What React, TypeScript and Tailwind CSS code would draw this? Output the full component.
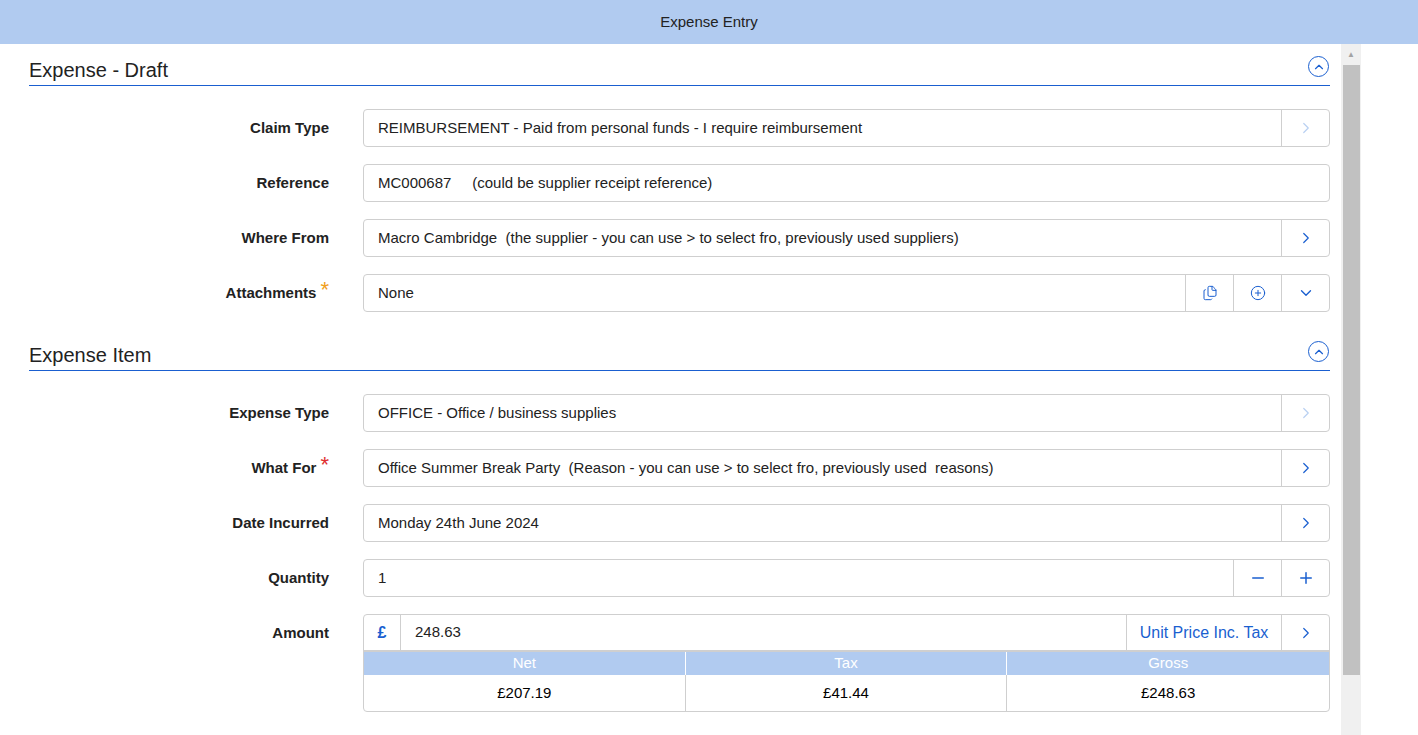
import { ChevronRight, ChevronUp, ChevronDown, Minus, Plus, Files, CirclePlus } from "lucide-react"

function Btn({ children, faded, w = "w-[48px]" }: { children: React.ReactNode; faded?: boolean; w?: string }) {
  return (
    <div className={`${w} flex items-center justify-center border-l border-[#cfcfcf] ${faded ? "text-[#b9d0f2]" : "text-[#1a5fd0]"}`}>
      {children}
    </div>
  )
}

function Row({ label, star, children }: { label: string; star?: string; children: React.ReactNode }) {
  return (
    <div className="flex items-center h-[38px] mb-[17px]">
      <div className="w-[334px] pr-[34px] text-right text-[15px] font-bold text-[#222] flex justify-end items-center">
        {label}
        {star && <span className={`ml-[4px] text-[22px] font-normal leading-none -mt-[6px] ${star}`}>*</span>}
      </div>
      <div className="flex-1 h-[38px] flex border border-[#cfcfcf] rounded-[4px] bg-white">{children}</div>
    </div>
  )
}

function Val({ children }: { children: React.ReactNode }) {
  return <div className="flex-1 flex items-center px-[14px] text-[15px] text-[#222] whitespace-pre">{children}</div>
}

function Section({ title }: { title: string }) {
  return (
    <div className="flex items-center justify-between border-b border-[#1a5fd0] h-[42px] mb-[23px]">
      <span className="text-[20px] text-[#222] pt-[10px]">{title}</span>
      <div className="w-[21px] h-[21px] rounded-full border-[1.5px] border-[#1a5fd0] flex items-center justify-center text-[#1a5fd0] mt-[4px] mr-[1px]">
        <ChevronUp size={14} strokeWidth={2} />
      </div>
    </div>
  )
}

export default function App() {
  const chev = <ChevronRight size={18} strokeWidth={1.6} />
  return (
    <div className="w-[1418px] h-[735px] overflow-hidden bg-white" style={{ fontFamily: "Arial, 'Liberation Sans', sans-serif" }}>
      <div className="h-[44px] bg-[#b1cbf0] flex items-center justify-center text-[15px] text-[#222]">Expense Entry</div>
      <div className="flex h-[691px]">
        <div className="w-[1341px] pl-[29px] pr-[11px]">
          <Section title="Expense - Draft" />
          <Row label="Claim Type">
            <Val>REIMBURSEMENT - Paid from personal funds - I require reimbursement</Val>
            <Btn faded>{chev}</Btn>
          </Row>
          <Row label="Reference">
            <Val>MC000687     (could be supplier receipt reference)</Val>
          </Row>
          <Row label="Where From">
            <Val>Macro Cambridge  (the supplier - you can use {">"} to select fro, previously used suppliers)</Val>
            <Btn>{chev}</Btn>
          </Row>
          <Row label="Attachments" star="text-[#f0a020]">
            <Val>None</Val>
            <Btn><Files size={16} strokeWidth={1.5} /></Btn>
            <Btn><CirclePlus size={16} strokeWidth={1.5} /></Btn>
            <Btn><ChevronDown size={18} strokeWidth={1.8} /></Btn>
          </Row>
          <Section title="Expense Item" />
          <Row label="Expense Type">
            <Val>OFFICE - Office / business supplies</Val>
            <Btn faded>{chev}</Btn>
          </Row>
          <Row label="What For" star="text-[#e03030]">
            <Val>Office Summer Break Party  (Reason - you can use {">"} to select fro, previously used  reasons)</Val>
            <Btn>{chev}</Btn>
          </Row>
          <Row label="Date Incurred">
            <Val>Monday 24th June 2024</Val>
            <Btn>{chev}</Btn>
          </Row>
          <Row label="Quantity">
            <Val>1</Val>
            <Btn><Minus size={18} strokeWidth={2} /></Btn>
            <Btn><Plus size={18} strokeWidth={2} /></Btn>
          </Row>
          <div className="flex">
            <div className="w-[334px] pr-[34px] text-right text-[15px] font-bold text-[#222] h-[38px] flex items-center justify-end">Amount</div>
            <div className="flex-1 border border-[#cfcfcf] rounded-[4px]">
              <div className="h-[37px] flex border-b-2 border-[#cfcfcf]">
                <div className="w-[37px] flex items-center justify-center text-[#1a5fd0] text-[16px] font-bold border-r border-[#cfcfcf]">£</div>
                <Val>248.63</Val>
                <div className="w-[155px] flex items-center justify-center border-l border-[#cfcfcf] text-[#1a5fd0] text-[16px]">Unit Price Inc. Tax</div>
                <Btn>{chev}</Btn>
              </div>
              <div className="grid grid-cols-3 bg-[#b1cbf0] h-[23px] text-white text-[15px]">
                <div className="flex items-center justify-center border-r border-white">Net</div>
                <div className="flex items-center justify-center border-r border-white">Tax</div>
                <div className="flex items-center justify-center">Gross</div>
              </div>
              <div className="grid grid-cols-3 h-[36px] text-[15px] text-black">
                <div className="flex items-center justify-center border-r border-[#cfcfcf]">£207.19</div>
                <div className="flex items-center justify-center border-r border-[#cfcfcf]">£41.44</div>
                <div className="flex items-center justify-center">£248.63</div>
              </div>
            </div>
          </div>
        </div>
        <div className="w-[20px] bg-[#f0f0f0] flex flex-col items-center">
          <div className="h-[21px] flex items-center text-[#a3a3a3] text-[8px]">▲</div>
          <div className="w-[17px] h-[610px] bg-[#c1c1c1]" />
        </div>
      </div>
    </div>
  )
}
